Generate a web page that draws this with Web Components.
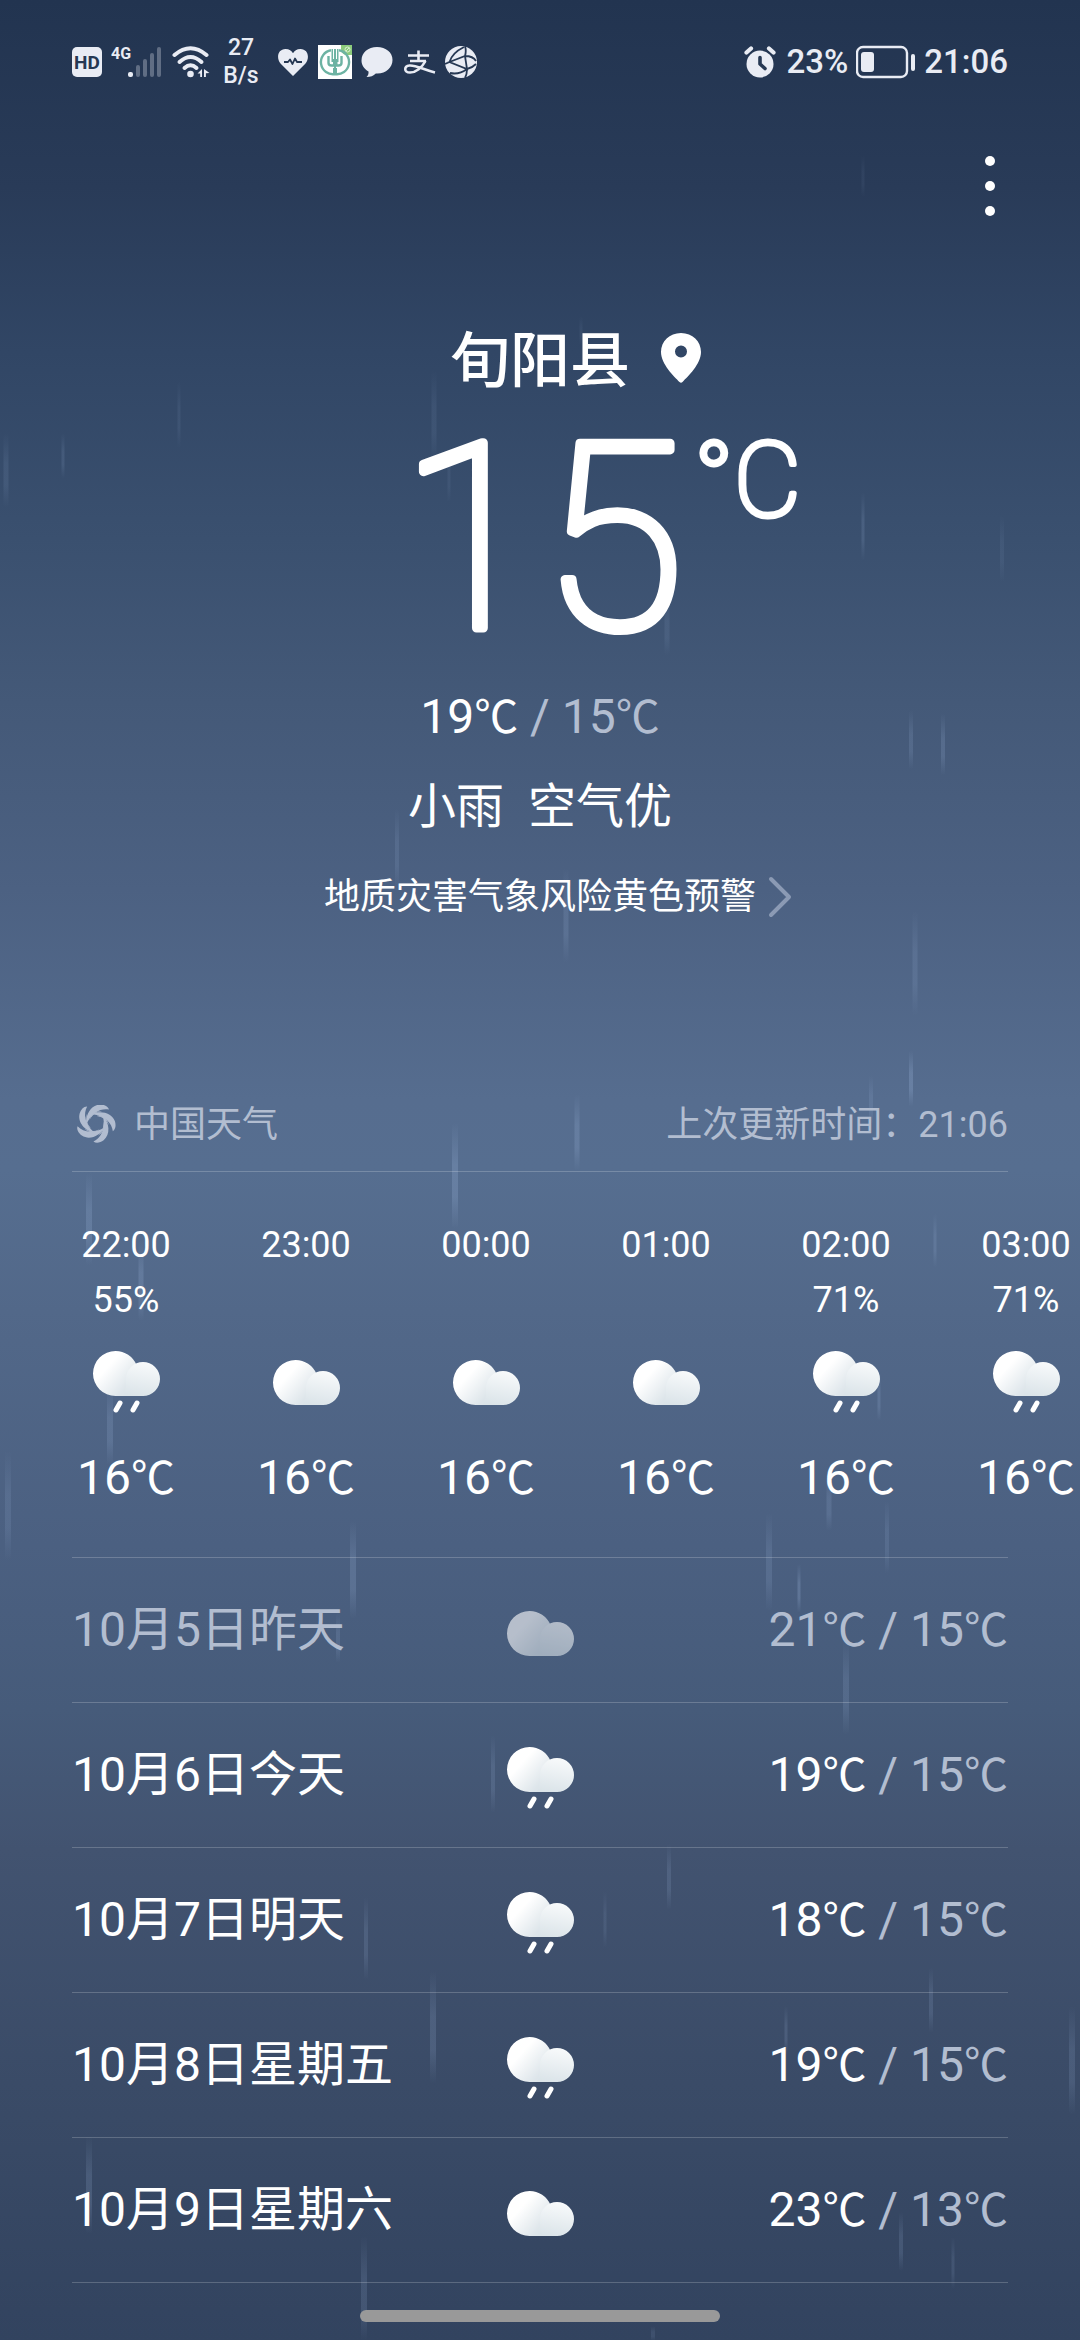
<!DOCTYPE html>
<html lang="zh-CN">
<head>
<meta charset="utf-8">
<meta name="viewport" content="width=device-width, initial-scale=1">
<title>天气</title>
<style>
html, body {
    margin: 0;
    min-height: 100%;
}

body {
    font-family: Roboto, "Noto Sans CJK SC", sans-serif;
    font-size: 36px;
    color: #fff;
    --muted-color: #b2bdd0;
    --line-color: rgba(255, 255, 255, 0.2);
    --page-gutter: 72px;
}
</style>
</head>
<body>

<weather-app>
    <status-bar slot="status">
        <span slot="speed">27</span>
        <span slot="unit">B/s</span>
        <span slot="battery">23%</span>
        <time slot="clock">21:06</time>
    </status-bar>

    <current-weather>
        <span slot="city">旬阳县</span>
        <temp-range slot="range" high="19" low="15"></temp-range>
        <span slot="condition">小雨</span>
        <span slot="condition">空气优</span>
        <span slot="warning">地质灾害气象风险黄色预警</span>
    </current-weather>

    <source-bar>
        <span slot="source">中国天气</span>
        <span slot="updated">上次更新时间：21:06</span>
    </source-bar>

    <hourly-forecast>
        <hour-item time="22:00" chance="55%" icon="rain" temp="16"></hour-item>
        <hour-item time="23:00" icon="cloud" temp="16"></hour-item>
        <hour-item time="00:00" icon="cloud" temp="16"></hour-item>
        <hour-item time="01:00" icon="cloud" temp="16"></hour-item>
        <hour-item time="02:00" chance="71%" icon="rain" temp="16"></hour-item>
        <hour-item time="03:00" chance="71%" icon="rain" temp="16"></hour-item>
    </hourly-forecast>

    <daily-forecast>
        <day-item icon="cloud" past>10月5日昨天<temp-range slot="range" high="21" low="15" past></temp-range></day-item>
        <day-item icon="rain">10月6日今天<temp-range slot="range" high="19" low="15"></temp-range></day-item>
        <day-item icon="rain">10月7日明天<temp-range slot="range" high="18" low="15"></temp-range></day-item>
        <day-item icon="rain">10月8日星期五<temp-range slot="range" high="19" low="15"></temp-range></day-item>
        <day-item icon="cloud">10月9日星期六<temp-range slot="range" high="23" low="13"></temp-range></day-item>
    </daily-forecast>
</weather-app>

<script>
// Small base class: every element renders its own styles and template once
class BaseElement extends HTMLElement {

    get styles(){
        return '';
    }

    get template(){
        return '<slot></slot>';
    }

    connectedCallback(){
        if(this.shadowRoot) return;
        const template = document.createElement('template');
        template.innerHTML = `<style>${this.styles}</style>${this.template}`;
        this.attachShadow({mode: 'open'}).appendChild(template.content.cloneNode(true));
    }

    attr(name){
        return this.getAttribute(name) || '';
    }

}

class WeatherApp extends BaseElement {

    get styles(){
        return `:host {
    display: flex;
    flex-direction: column;
    position: relative;
    min-height: 100vh;
    overflow: hidden;
    background: linear-gradient(#223450 0%, #293b58 8%, #314665 15%, #3a506f 23%, #445978 30%, #4c6182 38%, #566d8f 47%, #566e90 50%, #526889 56%, #4b6081 66%, #465b7a 73%, #425370 79%, #3a4b67 89%, #32435f 100%);
}

main {
    position: relative;
    flex: 1 0 auto;
}

footer {
    position: relative;
    display: flex;
    justify-content: center;
    padding: 27px 0 19px;
}

.handle {
    width: 33.4%;
    height: 12px;
    border-radius: 6px;
    background: #999;
}`
    }

    get template(){
        return `<rain-layer></rain-layer>
            <slot name="status"></slot>
            <main><slot></slot></main>
            <footer><span class="handle"></span></footer>`
    }

}

class RainLayer extends BaseElement {

    get styles(){
        return `:host {
    position: absolute;
    inset: 0;
    pointer-events: none;
}

svg {
    display: block;
    width: 100%;
    height: 100%;
}`
    }

    // x, top, bottom, width, opacity
    get drops(){
        return [
            [863, 155, 197, 3, .06], [6, 433, 507, 5, .1], [63, 433, 478, 3, .12], [179, 381, 448, 3, .08],
            [434, 370, 460, 5, .08], [449, 450, 502, 3, .07], [581, 316, 345, 3, .06], [667, 597, 655, 5, .09],
            [863, 492, 560, 3, .14], [1002, 515, 582, 4, .07], [911, 710, 769, 4, .14], [943, 713, 775, 4, .16],
            [397, 808, 890, 4, .12], [566, 868, 962, 5, .14], [915, 910, 1015, 5, .12], [911, 1050, 1106, 4, .22],
            [871, 1075, 1125, 4, .12], [577, 1094, 1170, 5, .18], [455, 1122, 1228, 6, .2], [89, 1172, 1265, 6, .18],
            [141, 1240, 1320, 5, .18], [935, 1213, 1267, 3, .14], [879, 1373, 1420, 3, .16], [110, 1385, 1465, 6, .16],
            [8, 1450, 1560, 6, .12], [353, 1520, 1618, 6, .18], [829, 1475, 1530, 5, .14], [887, 1500, 1573, 4, .12],
            [769, 1512, 1610, 6, .14], [799, 1563, 1612, 3, .22], [338, 1612, 1662, 4, .14], [846, 1640, 1734, 6, .14],
            [493, 1734, 1812, 4, .14], [669, 1843, 1909, 4, .14], [605, 1890, 1947, 3, .1], [366, 1896, 1979, 4, .14],
            [433, 1970, 2083, 6, .16], [931, 1967, 2032, 4, .14], [786, 2005, 2054, 3, .14], [1072, 2005, 2114, 6, .14],
            [89, 2135, 2233, 6, .16], [364, 2235, 2340, 6, .14], [901, 2211, 2270, 4, .14], [953, 2236, 2288, 3, .12],
            [653, 2325, 2340, 4, .1]
        ];
    }

    get template(){
        const rects = this.drops.map(([x, top, bottom, w, o]) =>
            `<rect x="${x - w / 2}" y="${top}" width="${w}" height="${bottom - top}" rx="${w / 2}" fill="url(#drop)" opacity="${o}"/>`
        ).join('');
        return `<svg viewBox="0 0 1080 2340" preserveAspectRatio="none" aria-hidden="true">
            <defs>
                <linearGradient id="drop" x1="0" y1="0" x2="0" y2="1">
                    <stop offset="0" stop-color="#a9c3ea" stop-opacity="0"/>
                    <stop offset=".4" stop-color="#a9c3ea"/>
                    <stop offset=".7" stop-color="#a9c3ea"/>
                    <stop offset="1" stop-color="#a9c3ea" stop-opacity="0"/>
                </linearGradient>
            </defs>${rects}</svg>`
    }

}

class StatusBar extends BaseElement {

    get styles(){
        return `:host {
    display: flex;
    position: relative;
    align-items: center;
    justify-content: space-between;
    height: 124px;
    padding: 0 var(--page-gutter);
    color: #e9ecf4;
    font-weight: 500;
}

.group, .notices {
    display: flex;
    align-items: center;
    gap: 9px;
}

.group.end {
    gap: 8px;
}

.notices {
    margin-left: 5px;
}

.speed {
    display: flex;
    flex-direction: column;
    align-items: center;
    width: 44px;
    font-size: 23px;
    line-height: 28px;
}

.clock {
    font-size: 33px;
    line-height: 40px;
}

svg {
    display: block;
    fill: currentColor;
}

text {
    font-weight: 700;
}`
    }

    get template(){
        return `<div class="group">
            <svg width="30" height="32" viewBox="0 0 30 32">
                <rect y="1" width="30" height="30" rx="5"/>
                <text x="15" y="23" font-size="19" text-anchor="middle" fill="#263853">HD</text>
            </svg>
            <svg width="52" height="44" viewBox="0 -6 52 44">
                <text x="0" y="13" font-size="16">4G</text>
                <rect x="17" y="26" width="5" height="5" rx="2"/>
                <g opacity=".3">
                    <rect x="25" y="19" width="4" height="12" rx="2"/>
                    <rect x="32" y="13" width="4" height="18" rx="2"/>
                    <rect x="39" y="7" width="4" height="24" rx="2"/>
                    <rect x="46" y="1" width="4" height="30" rx="2"/>
                </g>
            </svg>
            <svg width="38" height="32" viewBox="0 0 38 32">
                <g fill="none" stroke="currentColor" stroke-width="4" stroke-linecap="round">
                    <path d="M2.500 9Q18.500-4.500 34.500 9"/>
                    <path d="M7.500 16Q18.500 6 29.500 16"/>
                    <path d="M12.500 22Q18.500 16.500 24.500 22"/>
                </g>
                <circle cx="18.500" cy="28" r="3.300"/>
                <path d="M30 23v8h-1.800v-3.500h-2.700zM32 23l5.500 4-3.600.2v3.800H32z"/>
            </svg>
            <div class="speed"><slot name="speed"></slot><slot name="unit"></slot></div>
            <div class="notices">
                <svg width="32" height="32" viewBox="0 0 32 32">
                    <path d="M16 30L3.500 17.500C-1 12 .8 3 8.500 3c3.800 0 6 2 7.500 4.200C17.500 5 19.700 3 23.500 3 31.200 3 33 12 28.500 17.500z"/>
                    <path d="M7 16h4l2-2.500 2.500 4.500 2.500-5.500 2 3.500h5" fill="none" stroke="#263853" stroke-width="1.800" stroke-linejoin="round"/>
                </svg>
                <svg width="34" height="34" viewBox="0 0 34 34">
                    <path fill="#fff" d="M0 0h34v34H0z"/>
                    <path fill="#8ccb7c" d="M23 0h11v10h-4a6 6 0 0 1-7-6z"/>
                    <circle cx="29.500" cy="4.500" r="2.500" fill="none" stroke="#d9efd2"/>
                    <path d="M28 6l3-3" stroke="#d9efd2"/>
                    <g fill="none" stroke="#6db3a3" stroke-width="2.400">
                        <path d="M13 5.200A12 12 0 0 0 17 29 12 12 0 0 0 21 5.200"/>
                        <path d="M10.500 11v7q0 2.500 3 2.500h7q3 0 3-2.500v-7"/>
                    </g>
                    <path fill="#6db3a3" d="M13.500 4H15v10h1V4h2v10h1V4h1.500v13h-1v3h-1.500v3h1v6h-4v-6h1v-3H15v-3h-1.500z"/>
                </svg>
                <svg width="32" height="32" viewBox="0 0 32 32">
                    <path d="M16 1C25 1 31.500 6.500 31.500 14S25 27.500 16.500 27.500h-1.700C12.500 30 9.500 31 5.500 31c1.800-1.500 2.200-3.500 2-5.500C3 23 .5 19 .5 14.500.5 6.500 7 1 16 1z"/>
                </svg>
                <svg width="34" height="32" viewBox="0 0 34 32">
                    <g fill="none" stroke="currentColor" stroke-width="2.600">
                        <path d="M6 9.500h21M16.500 4.500v11M8 15h16"/>
                        <path d="M23.500 15C20 21.500 14 26.500 8 26.500c-6.500 0-6-6.500-.5-7C14 19 21 23.500 33 26.500"/>
                    </g>
                </svg>
                <svg width="32" height="32" viewBox="0 0 32 32">
                    <circle cx="16" cy="16" r="16"/>
                    <g fill="none" stroke="#263853" stroke-width="1.800">
                        <path d="M4.500 16L20 10l2 13zM20 10q1.500-5 0-10M4.500 16Q7 7 19 1M4.500 16L0 18M22 23q0 5-2 9M22 23q5-1 9-5M22 23Q14 29 5 27M20 10q8 0 11 5"/>
                    </g>
                </svg>
            </div>
        </div>
        <div class="group end">
            <svg width="34" height="32" viewBox="0 0 34 32">
                <circle cx="16" cy="18" r="13.500"/>
                <path d="M2.500 6.500l4.500-4M29.500 6.500l-4.500-4" stroke="currentColor" stroke-width="4.200" stroke-linecap="round"/>
                <path d="M16 11.500V18l5 4.500" fill="none" stroke="#263853" stroke-width="3.600" stroke-linecap="round" stroke-linejoin="round"/>
            </svg>
            <span class="clock"><slot name="battery"></slot></span>
            <svg width="60" height="34" viewBox="0 0 60 34">
                <rect x="1" y="2" width="50" height="30" rx="6" fill="none" stroke="currentColor" stroke-width="2.400"/>
                <rect x="5" y="7" width="13" height="20" rx="3"/>
                <rect x="55" y="9" width="4" height="17" rx="2"/>
            </svg>
            <span class="clock"><slot name="clock"></slot></span>
        </div>`
    }

}

class CurrentWeather extends BaseElement {

    get styles(){
        return `:host {
    display: block;
}

header {
    display: flex;
    justify-content: flex-end;
    padding: 26px var(--page-gutter);
}

button {
    display: block;
    width: 36px;
    height: 72px;
    padding: 0;
    border: 0;
    background: none;
    color: inherit;
    cursor: pointer;
}

svg {
    display: block;
    overflow: visible;
}

/* The middle column stays centred, whatever stands beside it */
.row {
    display: grid;
    grid-template-columns: 1fr auto 1fr;
    align-items: center;
    line-height: 90px;
}

.city {
    margin-top: 72px;
    font-size: 60px;
    font-weight: 500;
    line-height: 84px;
}

h1 {
    margin: 0;
    font: inherit;
}

.pin {
    margin: 0 0 8px 30px;
}

.now {
    height: 268px;
    align-items: start;
}

.now text {
    fill: #fff;
    stroke: #fff;
    stroke-linejoin: round;
    stroke-linecap: round;
    font-weight: 100;
}

.range {
    text-align: center;
    font-size: 48px;
    line-height: 90px;
}

.conditions {
    display: flex;
    justify-content: center;
    gap: 24px;
    font-size: 48px;
    line-height: 90px;
}

a {
    grid-column: 2 / 4;
    display: flex;
    align-items: center;
    gap: 12px;
    color: inherit;
    text-decoration: none;
}

.warning {
    grid-template-columns: 1fr 432px 1fr;
}`
    }

    get template(){
        return `<header>
                <button type="button" aria-label="更多">
                    <svg width="36" height="72" viewBox="0 0 36 72" fill="currentColor">
                        <circle cx="18" cy="11" r="5"/><circle cx="18" cy="36" r="5"/><circle cx="18" cy="61" r="5"/>
                    </svg>
                </button>
            </header>
            <div class="row city">
                <span></span>
                <h1><slot name="city"></slot></h1>
                <svg class="pin" width="42" height="52" viewBox="0 0 42 52" fill="currentColor">
                    <path fill-rule="evenodd" d="M21 1C9.500 1 1 9.500 1 20c0 12 13 24.500 18.500 30 1 1 2 1 3 0C28 44.500 41 32 41 20 41 9.500 32.500 1 21 1zm0 12.500a6 6 0 1 1 0 12 6 6 0 0 1 0-12z"/>
                </svg>
            </div>
            <div class="row now">
                <span></span>
                <svg width="308" height="268" viewBox="0 0 308 268">
                    <text x="156" y="224" font-size="260" stroke-width="9" text-anchor="middle">15</text>
                </svg>
                <svg width="110" height="130" viewBox="0 0 110 130">
                    <text x="0" y="112" font-size="104" stroke-width="5">°C</text>
                </svg>
            </div>
            <div class="range"><slot name="range"></slot></div>
            <div class="conditions"><slot name="condition"></slot></div>
            <div class="row warning">
                <span></span>
                <a href="#warning">
                    <slot name="warning"></slot>
                    <svg width="24" height="42" viewBox="0 0 24 42" fill="none" stroke="#8b9ab4" stroke-width="4" stroke-linecap="round" stroke-linejoin="round">
                        <path d="M3 3l18 18L3 39"/>
                    </svg>
                </a>
            </div>`
    }

}

class TempValue extends BaseElement {

    get styles(){
        return `:host {
    display: inline;
}

.unit {
    font-size: 44px;
    line-height: 1;
}`
    }

    get template(){
        return `<slot></slot><span class="unit">℃</span>`
    }

}

class TempRange extends BaseElement {

    get styles(){
        return `:host {
    display: inline;
    color: var(--muted-color);
    white-space: nowrap;
}

.high {
    color: #fff;
}

:host([past]) .high {
    color: inherit;
}`
    }

    get template(){
        return `<temp-value class="high">${this.attr('high')}</temp-value> / <temp-value>${this.attr('low')}</temp-value>`
    }

}

class SourceBar extends BaseElement {

    get styles(){
        return `:host {
    display: flex;
    align-items: center;
    justify-content: space-between;
    height: 93px;
    margin: 136px var(--page-gutter) 0;
    border-bottom: 1px solid var(--line-color);
    color: var(--muted-color);
    line-height: 48px;
}

.source {
    display: flex;
    align-items: center;
    gap: 18px;
    margin-left: 4px;
}

svg {
    display: block;
}`
    }

    get template(){
        const blades = [0, 72, 144, 216, 288].map(deg =>
            `<g transform="rotate(${deg})">
                <path d="M-9.500 1C-11-8-5-18 4-18.500 8-18.500 12-17 13-13.500 5-15-4-11-9.500 1z"/>
                <path d="M-6.500-3C-5-9 0-12.500 6-11.500 0-11-4-8-6.500-3z"/>
            </g>`
        ).join('');
        return `<span class="source">
                <svg width="40" height="40" viewBox="-20 -18 40 40" fill="currentColor">${blades}</svg>
                <slot name="source"></slot>
            </span>
            <slot name="updated"></slot>`
    }

}

class WeatherIcon extends BaseElement {

    get styles(){
        return `:host {
    display: block;
    width: 72px;
    height: 72px;
}

svg {
    display: block;
}`
    }

    get template(){
        const rain = this.attr('type') === 'rain';
        const drops = `<path d="M30 60l-4 7M47 60l-4 7" stroke="#fff" stroke-width="5" stroke-linecap="round"/>`;
        return `<svg width="72" height="72" viewBox="0 0 72 72" role="img" aria-label="${rain ? '小雨' : '多云'}">
            <defs>
                <linearGradient id="big" x1="0" y1="0" x2="1" y2=".8">
                    <stop offset=".35" stop-color="#fff"/>
                    <stop offset=".8" stop-color="#dde5ea"/>
                </linearGradient>
                <linearGradient id="small" x1=".6" y1="0" x2=".4" y2="1">
                    <stop offset="0" stop-color="#f8fafb"/>
                    <stop offset="1" stop-color="#dbe4e9"/>
                </linearGradient>
            </defs>
            <g transform="translate(0 ${rain ? 0 : 9})">
                <path fill="url(#big)" d="M25.500 8a22.500 22.500 0 0 1 21 14L54 53H25.500a22.500 22.500 0 0 1 0-45z"/>
                <path fill="url(#small)" d="M53 19a17 17 0 0 1 0 34H32c4-4 4-8 4-17a17 17 0 0 1 17-17z"/>
            </g>
            ${rain ? drops : ''}
        </svg>`
    }

}

class HourlyForecast extends BaseElement {

    get styles(){
        return `:host {
    display: flex;
    overflow-x: auto;
    scrollbar-width: none;
    padding: 46px 36px 47px;
}`
    }

}

class HourItem extends BaseElement {

    get styles(){
        return `:host {
    display: flex;
    flex: 0 0 180px;
    flex-direction: column;
    align-items: center;
    line-height: 55px;
}

.chance {
    height: 55px;
}

weather-icon {
    margin: 15px 0 31px;
}

.temp {
    font-size: 48px;
    line-height: 64px;
}`
    }

    get template(){
        return `<time>${this.attr('time')}</time>
            <span class="chance">${this.attr('chance')}</span>
            <weather-icon type="${this.attr('icon')}"></weather-icon>
            <span class="temp"><temp-value>${this.attr('temp')}</temp-value></span>`
    }

}

class DailyForecast extends BaseElement {

    get styles(){
        return `:host {
    display: flex;
    flex-direction: column;
    margin: 0 var(--page-gutter);
    border-top: 1px solid var(--line-color);
}`
    }

}

class DayItem extends BaseElement {

    get styles(){
        return `:host {
    display: grid;
    grid-template-columns: 1fr auto 1fr;
    align-items: center;
    height: 144px;
    border-bottom: 1px solid var(--line-color);
    font-size: 48px;
    line-height: 72px;
}

:host([past]) {
    color: var(--muted-color);
}

:host([past]) weather-icon {
    opacity: 0.6;
}

.range {
    text-align: right;
}`
    }

    get template(){
        return `<span><slot></slot></span>
            <weather-icon type="${this.attr('icon')}"></weather-icon>
            <span class="range"><slot name="range"></slot></span>`
    }

}

window.customElements.define('rain-layer', RainLayer);
window.customElements.define('weather-icon', WeatherIcon);
window.customElements.define('temp-value', TempValue);
window.customElements.define('temp-range', TempRange);
window.customElements.define('status-bar', StatusBar);
window.customElements.define('current-weather', CurrentWeather);
window.customElements.define('source-bar', SourceBar);
window.customElements.define('hour-item', HourItem);
window.customElements.define('hourly-forecast', HourlyForecast);
window.customElements.define('day-item', DayItem);
window.customElements.define('daily-forecast', DailyForecast);
window.customElements.define('weather-app', WeatherApp);
</script>
</body>
</html>
